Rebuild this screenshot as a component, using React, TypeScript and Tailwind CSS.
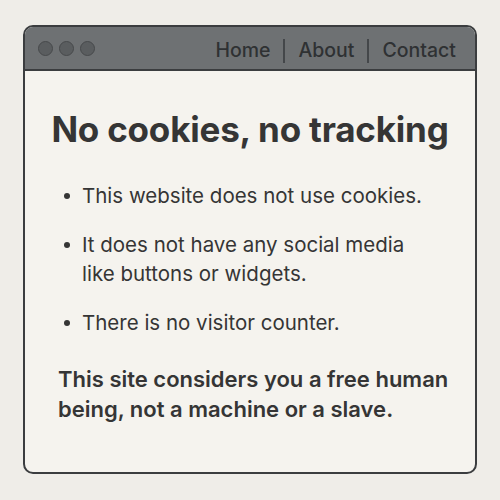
const navLinks = ['Home', 'About', 'Contact'];

const points = [
  'This website does not use cookies.',
  'It does not have any social media like buttons or widgets.',
  'There is no visitor counter.',
];

export default function App() {
  return (
    <div
      className="h-[500px] w-[500px] bg-[#efede8] pl-[23px] pt-[25px] text-[#353535]"
      style={{ fontFamily: 'Inter, "Noto Sans", sans-serif' }}
    >
      <div className="flex h-[449px] w-[454px] flex-col overflow-hidden rounded-[10px] border-2 border-[#3b3d3f] bg-[#f5f3ee]">
        <div className="flex h-[44px] shrink-0 items-center justify-between border-b-2 border-[#3b3d3f] bg-[#6e7173] pl-[13px] pr-[19px]">
          <div className="flex gap-[6px]">
            <span className="h-[15px] w-[15px] rounded-full border-[1.5px] border-[#47494b] bg-[#5a5d5f]" />
            <span className="h-[15px] w-[15px] rounded-full border-[1.5px] border-[#47494b] bg-[#5a5d5f]" />
            <span className="h-[15px] w-[15px] rounded-full border-[1.5px] border-[#47494b] bg-[#5a5d5f]" />
          </div>
          <nav className="mt-[5px] flex items-center text-[19.5px] font-medium text-[#2f3133]">
            {navLinks.map((link, i) => (
              <div key={link} className="flex items-center">
                {i > 0 && <span className="mx-[13px] h-[24px] w-[2px] bg-[#44474a]" />}
                <span>{link}</span>
              </div>
            ))}
          </nav>
        </div>

        <div className="px-[33px] pt-[35px]">
          <h1 className="-mx-[24px] whitespace-nowrap text-center text-[35px] font-bold leading-[46px] tracking-[-0.2px]">
            No cookies, no tracking
          </h1>

          <ul className="mt-[29px] flex flex-col gap-[20px] pl-[6px] text-[20.5px] leading-[29px]">
            {points.map((p) => (
              <li key={p} className="flex">
                <span className="mr-[12px] mt-[12px] h-[6px] w-[6px] shrink-0 rounded-full bg-[#353535]" />
                <span className="max-w-[340px]">{p}</span>
              </li>
            ))}
          </ul>

          <p className="-mr-[24px] mt-[27px] text-[22px] font-semibold leading-[30px]">
            This site considers you a free human being, not a machine or a slave.
          </p>
        </div>
      </div>
    </div>
  );
}
